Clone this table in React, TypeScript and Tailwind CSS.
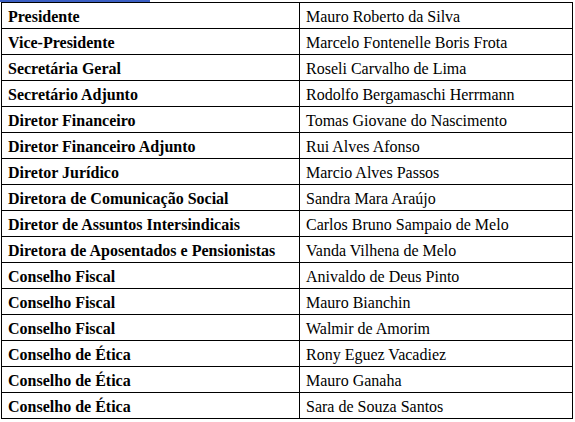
const rows: [string, string][] = [
  ["Presidente", "Mauro Roberto da Silva"],
  ["Vice-Presidente", "Marcelo Fontenelle Boris Frota"],
  ["Secretária Geral", "Roseli Carvalho de Lima"],
  ["Secretário Adjunto", "Rodolfo Bergamaschi Herrmann"],
  ["Diretor Financeiro", "Tomas Giovane do Nascimento"],
  ["Diretor Financeiro Adjunto", "Rui Alves Afonso"],
  ["Diretor Jurídico", "Marcio Alves Passos"],
  ["Diretora de Comunicação Social", "Sandra Mara Araújo"],
  ["Diretor de Assuntos Intersindicais", "Carlos Bruno Sampaio de Melo"],
  ["Diretora de Aposentados e Pensionistas", "Vanda Vilhena de Melo"],
  ["Conselho Fiscal", "Anivaldo de Deus Pinto"],
  ["Conselho Fiscal", "Mauro Bianchin"],
  ["Conselho Fiscal", "Walmir de Amorim"],
  ["Conselho de Ética", "Rony Eguez Vacadiez"],
  ["Conselho de Ética", "Mauro Ganaha"],
  ["Conselho de Ética", "Sara de Souza Santos"],
];

export default function App() {
  return (
    <div className="relative bg-white w-[575px] h-[422px] overflow-hidden text-black">
      {/* blue strip from the page above */}
      <div className="absolute left-0 top-0 w-[150px] h-[2px] bg-[#3b5fc4]" />
      <div className="pt-[2px] pl-[1px]">
        <table className="border-collapse w-[572px] font-['Liberation_Serif',_serif] text-[16px] leading-[18px]">
          <tbody>
            {rows.map(([cargo, nome], i) => (
              <tr key={i} className="h-[26px]">
                <td className="w-[298px] border border-black pl-[6px] pr-[6px] pt-[2px] pb-0 font-bold align-middle">{cargo}</td>
                <td className="border border-black pl-[6px] pr-[6px] pt-[2px] pb-0 align-middle">{nome}</td>
              </tr>
            ))}
          </tbody>
        </table>
      </div>
    </div>
  );
}
